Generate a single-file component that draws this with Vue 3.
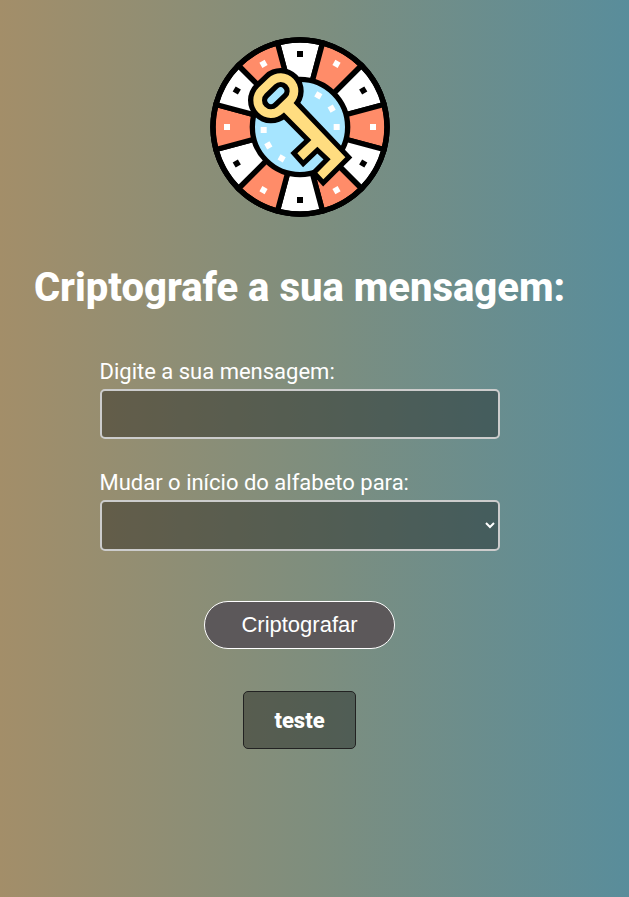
<script setup>
import { ref } from 'vue'

const message = ref('')
const start = ref('')
const result = ref('teste')
const letters = 'ABCDEFGHIJKLMNOPQRSTUVWXYZ'.split('')
const steps = Array.from({ length: 12 }, (_, i) => i)

function encrypt() {
  const shift = Math.max(0, letters.indexOf(start.value))
  result.value = message.value.replace(/[a-z]/gi, (c) => {
    const base = c <= 'Z' ? 65 : 97
    return String.fromCharCode(((c.charCodeAt(0) - base + shift) % 26) + base)
  })
}
</script>

<template>
  <main class="page">
    <svg class="logo" viewBox="15 15 540 540" aria-hidden="true">
      <circle cx="285" cy="285" r="269" fill="#000" />
      <g v-for="i in steps" :key="i" :transform="`rotate(${i * 30} 285 285)`">
        <path
          d="M285 285 L217.5 32.9 A261 261 0 0 1 352.5 32.9 Z"
          :fill="i % 2 ? '#ff8c69' : '#fff'"
          stroke="#000"
          stroke-width="16"
        />
        <rect x="276" y="57" width="18" height="18" :fill="i % 2 ? '#fff' : '#000'" />
      </g>
      <circle cx="285" cy="285" r="261" fill="none" stroke="#000" stroke-width="16" />
      <circle cx="285" cy="285" r="143" fill="#a6e5ff" stroke="#000" stroke-width="16" />
      <g fill="#fff">
        <rect x="331" y="181" width="18" height="18" transform="rotate(30 340 190)" />
        <rect x="371" y="221" width="18" height="18" transform="rotate(60 380 230)" />
        <rect x="386" y="276" width="18" height="18" />
        <rect x="167" y="285" width="18" height="18" />
        <rect x="181" y="331" width="18" height="18" transform="rotate(60 190 340)" />
        <rect x="221" y="370" width="18" height="18" transform="rotate(30 230 379)" />
      </g>
      <g fill="none" stroke-linecap="round">
        <path d="M198 205 L227 177" stroke="#000" stroke-width="138" />
        <path
          d="M262 209 L421 376 L355 442 L337 422 L377 382 L337 344 L295 384 L277 364 L319 324 L232 236 Z"
          fill="#ffdd80"
          stroke="#000"
          stroke-width="30"
          paint-order="stroke"
        />
        <path d="M198 205 L227 177" stroke="#ffdd80" stroke-width="106" />
        <path d="M198 205 L227 177" stroke="#000" stroke-width="54" />
        <path d="M198 205 L227 177" stroke="#a6e5ff" stroke-width="22" />
      </g>
    </svg>

    <h1>Criptografe a sua mensagem:</h1>

    <form class="form" @submit.prevent="encrypt">
      <div class="field">
        <label for="message">Digite a sua mensagem:</label>
        <input id="message" v-model="message" type="text" autocomplete="off" />
      </div>
      <div class="field">
        <label for="start">Mudar o início do alfabeto para:</label>
        <select id="start" v-model="start">
          <option value=""></option>
          <option v-for="l in letters" :key="l" :value="l">{{ l }}</option>
        </select>
      </div>
      <button type="submit">Criptografar</button>
    </form>

    <output class="result" for="message start">{{ result }}</output>
  </main>
</template>

<style>
body {
  margin: 0;
}
</style>

<style scoped>
.page {
  box-sizing: border-box;
  min-height: 100vh;
  padding: 37px 30px 40px 0;
  display: flex;
  flex-direction: column;
  align-items: center;
  background: linear-gradient(to right, #a38e69, #7e8e7e 50%, #598d9b);
  color: #fff;
  font-family: Roboto, sans-serif;
  font-size: 22px;
}
.logo {
  width: 180px;
  height: 180px;
}
h1 {
  margin: 47px 0 45px;
  font-size: 40px;
  line-height: 48px;
  font-weight: 800;
  text-align: center;
}
.form {
  width: 100%;
  max-width: 400px;
  display: flex;
  flex-direction: column;
  align-items: center;
  gap: 29px;
}
.field {
  width: 100%;
  display: flex;
  flex-direction: column;
  gap: 2px;
}
label {
  line-height: 30px;
}
input,
select {
  box-sizing: border-box;
  width: 100%;
  height: 50px;
  margin: 0;
  border: 2px solid #ccc;
  border-radius: 5px;
  background: rgba(0, 0, 0, 0.34);
  color: #fff;
  font-family: inherit;
  font-size: 22px;
}
input {
  padding: 0 8px;
}
select {
  height: 51px;
}
option {
  color: #000;
}
button {
  margin-top: 21px;
  height: 48px;
  padding: 0 36px;
  border: 1px solid #fff;
  border-radius: 24px;
  background: #5c585a;
  color: #fff;
  font-family: "Liberation Sans", Arial, sans-serif;
  font-size: 22px;
}
.result {
  margin-top: 42px;
  padding: 14px 30px 12px;
  border: 1px solid #222;
  border-radius: 5px;
  background: rgba(0, 0, 0, 0.34);
  line-height: 30px;
  font-weight: 800;
}
</style>
